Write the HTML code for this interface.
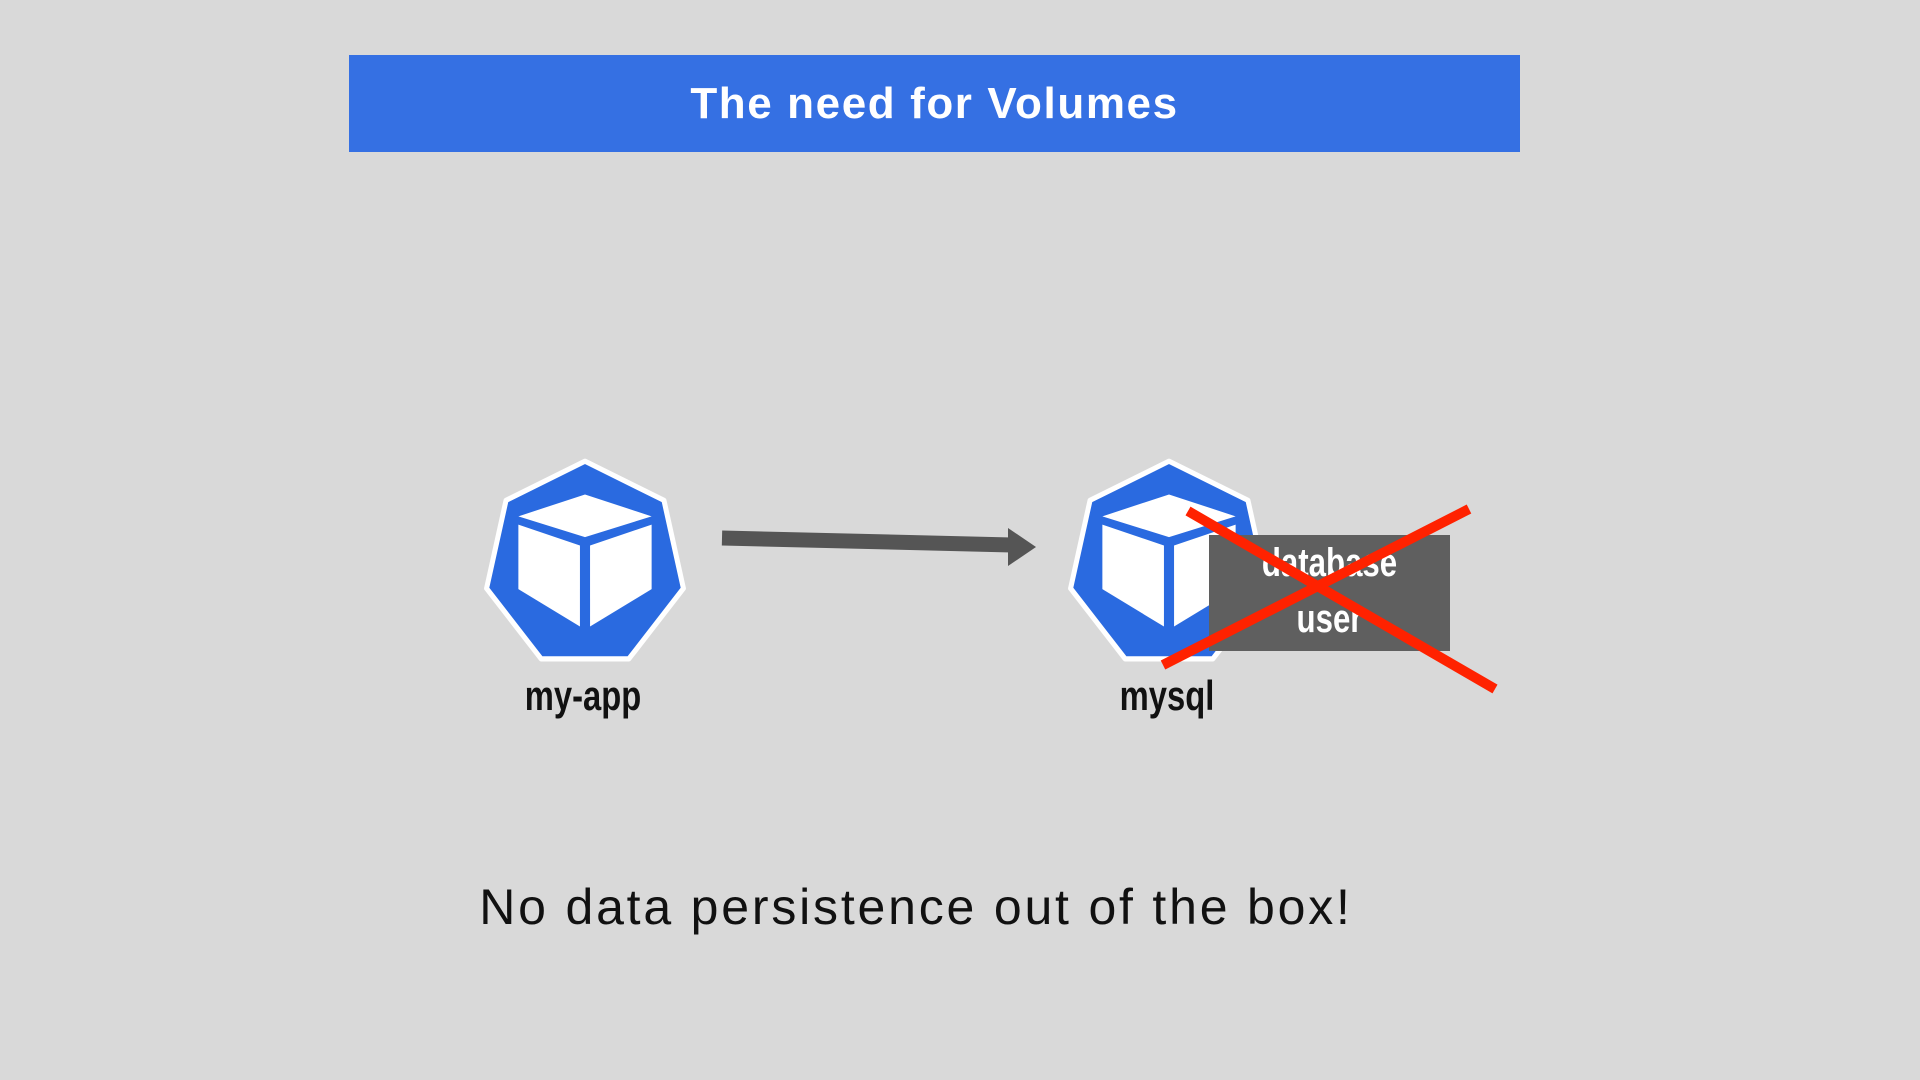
<!DOCTYPE html>
<html><head><meta charset="utf-8"><style>
html,body{margin:0;padding:0}
body{width:1920px;height:1080px;background:#d9d9d9;position:relative;overflow:hidden;font-family:"Liberation Sans",sans-serif}
.banner{position:absolute;left:349px;top:55px;width:1171px;height:97px;background:#3570e3;color:#fff;font-weight:bold;font-size:44px;text-align:center;line-height:97px;letter-spacing:1.6px}
.lbl{position:absolute;font-weight:bold;font-size:42px;color:#111;transform:scaleX(0.78);transform-origin:center;text-align:center;width:300px}
.box{position:absolute;left:1209px;top:535px;width:241px;height:116px;background:#5f5f5f}
.boxt{position:absolute;left:1209px;top:535px;width:241px;color:#fff;font-weight:bold;font-size:40px;line-height:56px;text-align:center;transform:scaleX(0.78)}
.bottom{position:absolute;left:0;width:1832px;top:878px;text-align:center;font-size:50px;color:#111;letter-spacing:2.8px}
svg{position:absolute}
</style></head><body>
<div class="banner">The need for Volumes</div>

<svg style="left:479px;top:456px" width="212" height="208" viewBox="0 0 210 200" preserveAspectRatio="none">
<polygon points="105,5 183.2,42.6 202.5,127.3 148.4,195.1 61.6,195.1 7.5,127.3 26.8,42.6" fill="#2a6ae0" stroke="#fff" stroke-width="5" stroke-linejoin="round"/>
<polygon points="105,37 171,58 105,78 39,58" fill="#fff"/>
<polygon points="39,66 100,86 100,164 39,128" fill="#fff"/>
<polygon points="171,66 110,86 110,164 171,128" fill="#fff"/>
</svg>
<svg style="left:1063px;top:456px" width="212" height="208" viewBox="0 0 210 200" preserveAspectRatio="none">
<polygon points="105,5 183.2,42.6 202.5,127.3 148.4,195.1 61.6,195.1 7.5,127.3 26.8,42.6" fill="#2a6ae0" stroke="#fff" stroke-width="5" stroke-linejoin="round"/>
<polygon points="105,37 171,58 105,78 39,58" fill="#fff"/>
<polygon points="39,66 100,86 100,164 39,128" fill="#fff"/>
<polygon points="171,66 110,86 110,164 171,128" fill="#fff"/>
</svg>

<div class="lbl" style="left:433px;top:672px">my-app</div>
<div class="lbl" style="left:1017px;top:672px">mysql</div>

<svg style="left:0;top:0" width="1920" height="1080">
<line x1="722" y1="538" x2="1012" y2="545" stroke="#555" stroke-width="15"/>
<polygon points="1008,528 1036,547 1008,566" fill="#555"/>
</svg>

<div class="box"></div>
<div class="boxt">database<br>user</div>

<svg style="left:0;top:0" width="1920" height="1080">
<line x1="1188" y1="511" x2="1495" y2="689" stroke="#ff2200" stroke-width="10"/>
<line x1="1469" y1="509" x2="1163" y2="665" stroke="#ff2200" stroke-width="10"/>
</svg>

<div class="bottom">No data persistence out of the box!</div>
</body></html>
